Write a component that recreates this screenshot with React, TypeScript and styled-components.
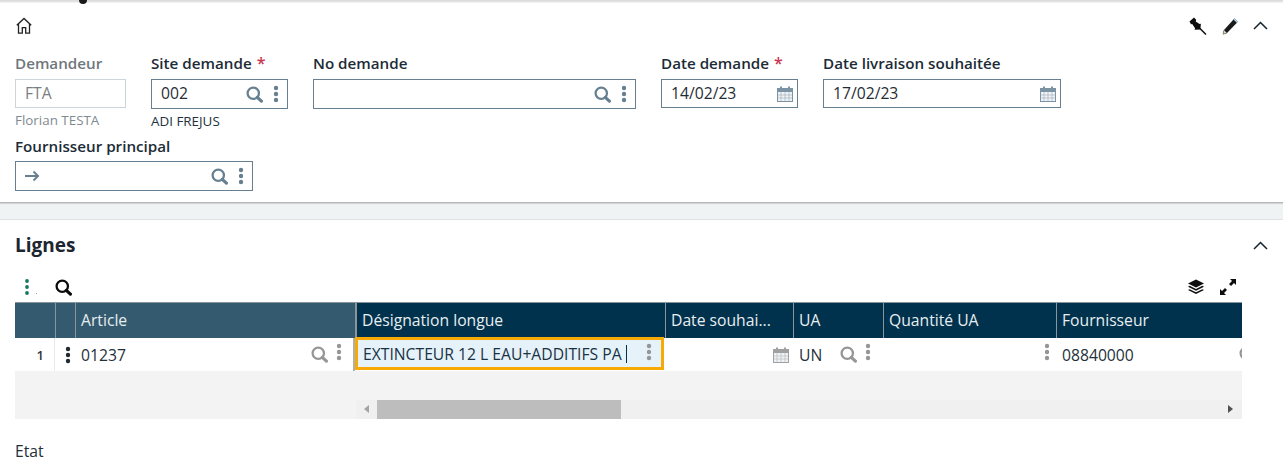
import React from "react";
import styled, { createGlobalStyle } from "styled-components";

const Global = createGlobalStyle`
  html, body { margin: 0; padding: 0; background: #eff3f4; }
  body { font-family: "Open Sans", "Liberation Sans", sans-serif; color: #1f2d36; overflow: hidden; }
  #root { height: 465px; overflow: hidden; }
`;

const Page = styled.div`
  position: relative;
  width: 1283px;
  height: 465px;
  overflow: hidden;
  display: flex;
  flex-direction: column;
`;
const TopDot = styled.div`
  position: absolute;
  left: 79px;
  top: -4px;
  width: 8px;
  height: 8px;
  border-radius: 50%;
  background: #1a1a1a;
`;
const HeaderPanel = styled.section`
  height: 203px;
  background: linear-gradient(#d9d9d9 0, #e6e6e6 2px, #fff 3px);
  box-sizing: border-box;
  border-bottom: 1px solid #b5b8ba;
  box-shadow: 0 1px 1px rgba(0, 0, 0, 0.12);
  padding: 16px 15px 0;
  display: flex;
  flex-direction: column;
`;
const BarRow = styled.div`
  height: 20px;
  display: flex;
  align-items: center;
  justify-content: space-between;
`;
const IconGroup = styled.div<{ $gap: number }>`
  display: flex;
  align-items: center;
  gap: ${(p) => p.$gap}px;
`;
const HomeIcon = styled.svg`
  width: 18px;
  height: 18px;
  display: block;
`;
const Fields = styled.div`
  display: flex;
  gap: 25px;
  margin-top: 15px;
`;
const Field = styled.div<{ $w: number }>`
  width: ${(p) => p.$w}px;
  display: flex;
  flex-direction: column;
`;
const Label = styled.div<{ $muted?: boolean; $h?: number }>`
  height: ${(p) => p.$h ?? 28}px;
  font-size: 15.2px;
  line-height: 24px;
  font-weight: 600;
  white-space: nowrap;
  color: ${(p) => (p.$muted ? "#6f777c" : "#1c2b36")};
`;
const Star = styled.span`
  color: #c8374f;
  margin-left: 5px;
  font-size: 16px;
  line-height: 1;
`;
const Box = styled.div<{ $muted?: boolean; $h?: number; $tight?: boolean }>`
  box-sizing: border-box;
  height: ${(p) => p.$h ?? 30}px;
  border: 1px solid ${(p) => (p.$muted ? "#ccd5d9" : "#668091")};
  display: flex;
  align-items: center;
  padding: 0 ${(p) => (p.$tight ? 4 : 8)}px 0 9px;
  font-size: 15.7px;
  color: ${(p) => (p.$muted ? "#7a7f83" : "#1f2d36")};
`;
const BoxText = styled.span`
  flex: 1;
  white-space: nowrap;
  display: flex;
  align-items: center;
  padding-bottom: 2px;
`;
const ArrowIcon = styled.svg`
  display: block;
  margin-top: 2px;
`;
const BoxIcons = styled.span<{ $gap?: number }>`
  display: flex;
  align-items: center;
  gap: ${(p) => p.$gap ?? 10}px;
`;
const Sub = styled.div<{ $muted?: boolean }>`
  font-size: 13.4px;
  line-height: 16px;
  height: 16px;
  margin-top: 4px;
  white-space: nowrap;
  color: ${(p) => (p.$muted ? "#7f8a90" : "#22313c")};
`;
const SecondRow = styled.div`
  margin-top: 5px;
`;

const Gap = styled.div`
  height: 16px;
`;
const LinesPanel = styled.section`
  flex: 1;
  background: #fff;
  border-top: 1px solid #dfe2e3;
  padding: 0 15px;
  position: relative;
`;
const LinesHead = styled.div`
  height: 51px;
  display: flex;
  align-items: center;
  justify-content: space-between;
`;
const LinesTitle = styled.h2`
  margin: 0 0 2px;
  font-size: 19px;
  font-weight: 700;
  color: #1c2630;
`;
const GridTools = styled.div`
  height: 30px;
  margin-top: 1px;
  display: flex;
  align-items: center;
  justify-content: space-between;
  width: 1227px;
`;
const ToolLeft = styled.div`
  display: flex;
  align-items: center;
  gap: 17px;
  padding-left: 9px;
`;
const ToolRight = styled(IconGroup)`
  padding-right: 5px;
`;
const TableWrap = styled.div`
  width: 1227px;
  overflow: hidden;
`;
const Cols = "40px 20px 280px 310px 128px 90px 173px 225px";
const HeadRow = styled.div`
  display: grid;
  grid-template-columns: ${Cols};
  height: 36px;
  box-sizing: border-box;
  border-top: 1px solid #8a9499;
  border-bottom: 2px solid #8a9499;
`;
const HeadCell = styled.div<{ $light?: boolean; $edge?: number }>`
  box-sizing: border-box;
  background: ${(p) => (p.$light ? "#335a6e" : "#00324d")};
  color: #e8eef1;
  font-size: 15.7px;
  line-height: 35px;
  padding-left: 5px;
  border-left: ${(p) => p.$edge ?? 1}px solid #8a9499;
  white-space: nowrap;
`;
const BodyRow = styled.div`
  display: grid;
  grid-template-columns: ${Cols};
  height: 33px;
  background: #fff;
`;
const Cell = styled.div<{ $right?: number; $edge?: boolean }>`
  box-sizing: border-box;
  display: flex;
  align-items: center;
  padding: 0 ${(p) => p.$right ?? 4}px 0 6px;
  font-size: 15.7px;
  color: #22303a;
  white-space: nowrap;
  overflow: hidden;
  min-width: 0;
  border-right: ${(p) => (p.$edge ? "2px solid #aab1b5" : "0")};
`;
const RowNum = styled(Cell)`
  justify-content: flex-end;
  padding: 0 10px 0 0;
  font-size: 13px;
  font-weight: 600;
  color: #30343a;
  border-right: 1px solid #e8eaeb;
`;
const MenuCell = styled(Cell)`
  padding: 0 0 0 10px;
`;
const CellText = styled.span`
  flex: 1;
`;
const Raised = styled.span`
  display: flex;
  margin-top: -5px;
`;
const Focused = styled.div`
  box-sizing: border-box;
  border: 3px solid #f7aa05;
  background: #e5f2fa;
  display: flex;
  align-items: center;
  padding: 1px 9px 0 5px;
  font-size: 15.7px;
  color: #1b3242;
  white-space: nowrap;
  height: 33px;
  width: 309px;
  margin-top: -1px;
`;
const Caret = styled.span`
  display: inline-block;
  width: 1px;
  height: 18px;
  background: #00324d;
  margin-left: 4px;
`;
const Filler = styled.div`
  background: #f3f3f3;
  height: 48px;
  display: flex;
  flex-direction: column;
  justify-content: flex-end;
`;
const ScrollBar = styled.div`
  margin-left: 341px;
  height: 19px;
  background: #f0f0f0;
  display: flex;
  align-items: center;
  position: relative;
  padding-left: 21px;
`;
const Arrow = styled.span<{ $right?: boolean }>`
  position: absolute;
  top: 5px;
  ${(p) => (p.$right ? "right: 9px;" : "left: 8px;")}
  width: 0;
  height: 0;
  border-top: 4.5px solid transparent;
  border-bottom: 4.5px solid transparent;
  ${(p) => (p.$right ? "border-left: 5px solid #505050;" : "border-right: 5px solid #a3a3a3;")}
`;
const Thumb = styled.div`
  width: 244px;
  height: 19px;
  background: #bdbdbd;
`;
const Etat = styled.div`
  margin-top: 22px;
  font-size: 15.7px;
  line-height: 20px;
  color: #22303a;
`;

const Mag = ({ c = "#668091" }: { c?: string }) => (
  <svg width="17" height="17" viewBox="0 0 18 18" fill="none">
    <circle cx="7.7" cy="7.7" r="6" stroke={c} strokeWidth="2.4" />
    <path d="M12 12l4.3 4" stroke={c} strokeWidth="3.4" strokeLinecap="round" />
  </svg>
);
const Kebab = ({ c = "#668091" }: { c?: string }) => (
  <svg width="6" height="18" viewBox="0 0 6 18" fill={c}>
    <circle cx="3" cy="3" r="2.2" />
    <circle cx="3" cy="9" r="2.2" />
    <circle cx="3" cy="15" r="2.2" />
  </svg>
);
const Cal = ({ c = "#7c93a3" }: { c?: string }) => (
  <svg width="16" height="16" viewBox="0 0 16 16" fill="none">
    <rect x="0.5" y="2.5" width="15" height="13" fill="#eef2f5" stroke={c} />
    <rect x="0.5" y="2" width="15" height="4" fill={c} />
    <rect x="3" y="0.5" width="2" height="3.5" fill={c} />
    <rect x="11" y="0.5" width="2" height="3.5" fill={c} />
    <path d="M4 6v9M8 6v9M12 6v9M1 9h14M1 12h14" stroke={c} strokeWidth="0.7" opacity="0.6" />
  </svg>
);
const Chevron = () => (
  <svg width="15" height="10" viewBox="0 0 15 10" fill="none">
    <path d="M1 8l6.5-6.5L14 8" stroke="#15222c" strokeWidth="1.5" />
  </svg>
);
const Pin = () => (
  <svg width="18" height="18" viewBox="0 0 18 18" fill="#0e0e0e">
    <path d="M0.5 4.5L5 0.5l2.2 2.3-.5 1.6 3.9 2.7 1.3-.3-.6 5.6-5.8.3.6-1.5-2.9-4.2-1.2.2z" />
    <path d="M9 9.5l8 8" stroke="#0e0e0e" strokeWidth="1.5" fill="none" />
  </svg>
);
const Pencil = () => (
  <svg width="16" height="17" viewBox="0 0 16 17">
    <path d="M11.5 1.5l3.4 3.2L5 15l-4 1.2L2 12z" fill="#1a1a1a" />
    <path d="M11.5 1.5l1-.8 3 3-.6 1z" fill="#e8f0f5" stroke="#3d6a8c" strokeWidth="0.7" />
    <path d="M1 16.2L2 12l3 3z" fill="#e9d7b5" stroke="#4d5a66" strokeWidth="0.5" />
  </svg>
);
const Layers = () => (
  <svg width="18" height="16" viewBox="0 0 18 16" fill="#0d0d0d">
    <path d="M9 0.5l8 4-8 4-8-4z" />
    <path d="M2.6 6.8L9 10l6.4-3.2L17 7.7l-8 4-8-4z" />
    <path d="M2.6 10.2L9 13.3l6.4-3.1 1.6.9-8 4-8-4z" />
  </svg>
);
const Expand = () => (
  <svg width="18" height="18" viewBox="0 0 18 18" fill="#0d0d0d">
    <path d="M11 1h6v6l-2-2-3 3-2-2 3-3z" />
    <path d="M7 17H1v-6l2 2 3-3 2 2-3 3z" />
  </svg>
);
const TealKebab = () => (
  <svg width="14" height="18" viewBox="0 0 14 18" fill="#137a62">
    <circle cx="3" cy="3" r="1.9" />
    <circle cx="3" cy="9" r="1.9" />
    <circle cx="3" cy="15" r="1.9" />
    <rect x="12" y="15" width="1" height="1" fill="#9aa86a" />
  </svg>
);

const Lookup = () => (
  <BoxIcons>
    <Mag />
    <Kebab />
  </BoxIcons>
);
const GrayKebab = () => (
  <Raised>
    <Kebab c="#969696" />
  </Raised>
);
const GrayLookup = () => (
  <BoxIcons $gap={8}>
    <Mag c="#969696" />
    <GrayKebab />
  </BoxIcons>
);

export default function App() {
  return (
    <Page>
      <Global />
      <TopDot />
      <HeaderPanel>
        <BarRow>
          <HomeIcon viewBox="0 0 18 18" fill="none" stroke="#222" strokeWidth="1.3">
            <path d="M1.8 8.2L9 1.5l7.2 6.7M3.5 7v9.2h3.8v-5.6h3.4v5.6h3.8V7" />
          </HomeIcon>
          <IconGroup $gap={15}>
            <Pin />
            <Pencil />
            <Chevron />
          </IconGroup>
        </BarRow>
        <Fields>
          <Field $w={111}>
            <Label $muted>Demandeur</Label>
            <Box $muted $h={29}>
              <BoxText>FTA</BoxText>
            </Box>
            <Sub $muted>Florian TESTA</Sub>
          </Field>
          <Field $w={137}>
            <Label>
              Site demande<Star>*</Star>
            </Label>
            <Box>
              <BoxText>002</BoxText>
              <Lookup />
            </Box>
            <Sub>ADI FREJUS</Sub>
          </Field>
          <Field $w={323}>
            <Label>No demande</Label>
            <Box>
              <BoxText />
              <Lookup />
            </Box>
          </Field>
          <Field $w={137}>
            <Label>
              Date demande<Star>*</Star>
            </Label>
            <Box $h={29} $tight>
              <BoxText>14/02/23</BoxText>
              <Cal />
            </Box>
          </Field>
          <Field $w={238}>
            <Label>Date livraison souhaitée</Label>
            <Box $h={29} $tight>
              <BoxText>17/02/23</BoxText>
              <Cal />
            </Box>
          </Field>
        </Fields>
        <SecondRow>
          <Field $w={238}>
            <Label $h={27}>Fournisseur principal</Label>
            <Box>
              <BoxText>
                <ArrowIcon width="15" height="12" viewBox="0 0 15 12" fill="none" stroke="#668091" strokeWidth="2">
                  <path d="M0 6h13M8.5 1.5L13 6l-4.5 4.5" />
                </ArrowIcon>
              </BoxText>
              <Lookup />
            </Box>
          </Field>
        </SecondRow>
      </HeaderPanel>
      <Gap />
      <LinesPanel>
        <LinesHead>
          <LinesTitle>Lignes</LinesTitle>
          <Chevron />
        </LinesHead>
        <GridTools>
          <ToolLeft>
            <TealKebab />
            <Mag c="#0b0b0b" />
          </ToolLeft>
          <ToolRight $gap={14}>
            <Layers />
            <Expand />
          </ToolRight>
        </GridTools>
        <TableWrap>
          <HeadRow>
            <HeadCell $light $edge={0} />
            <HeadCell $light />
            <HeadCell $light>Article</HeadCell>
            <HeadCell $edge={2}>Désignation longue</HeadCell>
            <HeadCell>Date souhai...</HeadCell>
            <HeadCell>UA</HeadCell>
            <HeadCell>Quantité UA</HeadCell>
            <HeadCell>Fournisseur</HeadCell>
          </HeadRow>
          <BodyRow>
            <RowNum>1</RowNum>
            <MenuCell>
              <Kebab c="#1f2a33" />
            </MenuCell>
            <Cell $edge $right={11}>
              <CellText>01237</CellText>
              <GrayLookup />
            </Cell>
            <Focused>
              <span>EXTINCTEUR 12 L EAU+ADDITIFS PA</span>
              <Caret />
              <BoxText />
              <GrayKebab />
            </Focused>
            <Cell>
              <BoxText />
              <Cal c="#a0a0a0" />
            </Cell>
            <Cell $right={12}>
              <CellText>UN</CellText>
              <GrayLookup />
            </Cell>
            <Cell $right={6}>
              <BoxText />
              <GrayKebab />
            </Cell>
            <Cell $right={11}>
              <CellText>08840000</CellText>
              <GrayLookup />
            </Cell>
          </BodyRow>
          <Filler>
            <ScrollBar>
              <Arrow />
              <Thumb />
              <Arrow $right />
            </ScrollBar>
          </Filler>
        </TableWrap>
        <Etat>Etat</Etat>
      </LinesPanel>
    </Page>
  );
}
